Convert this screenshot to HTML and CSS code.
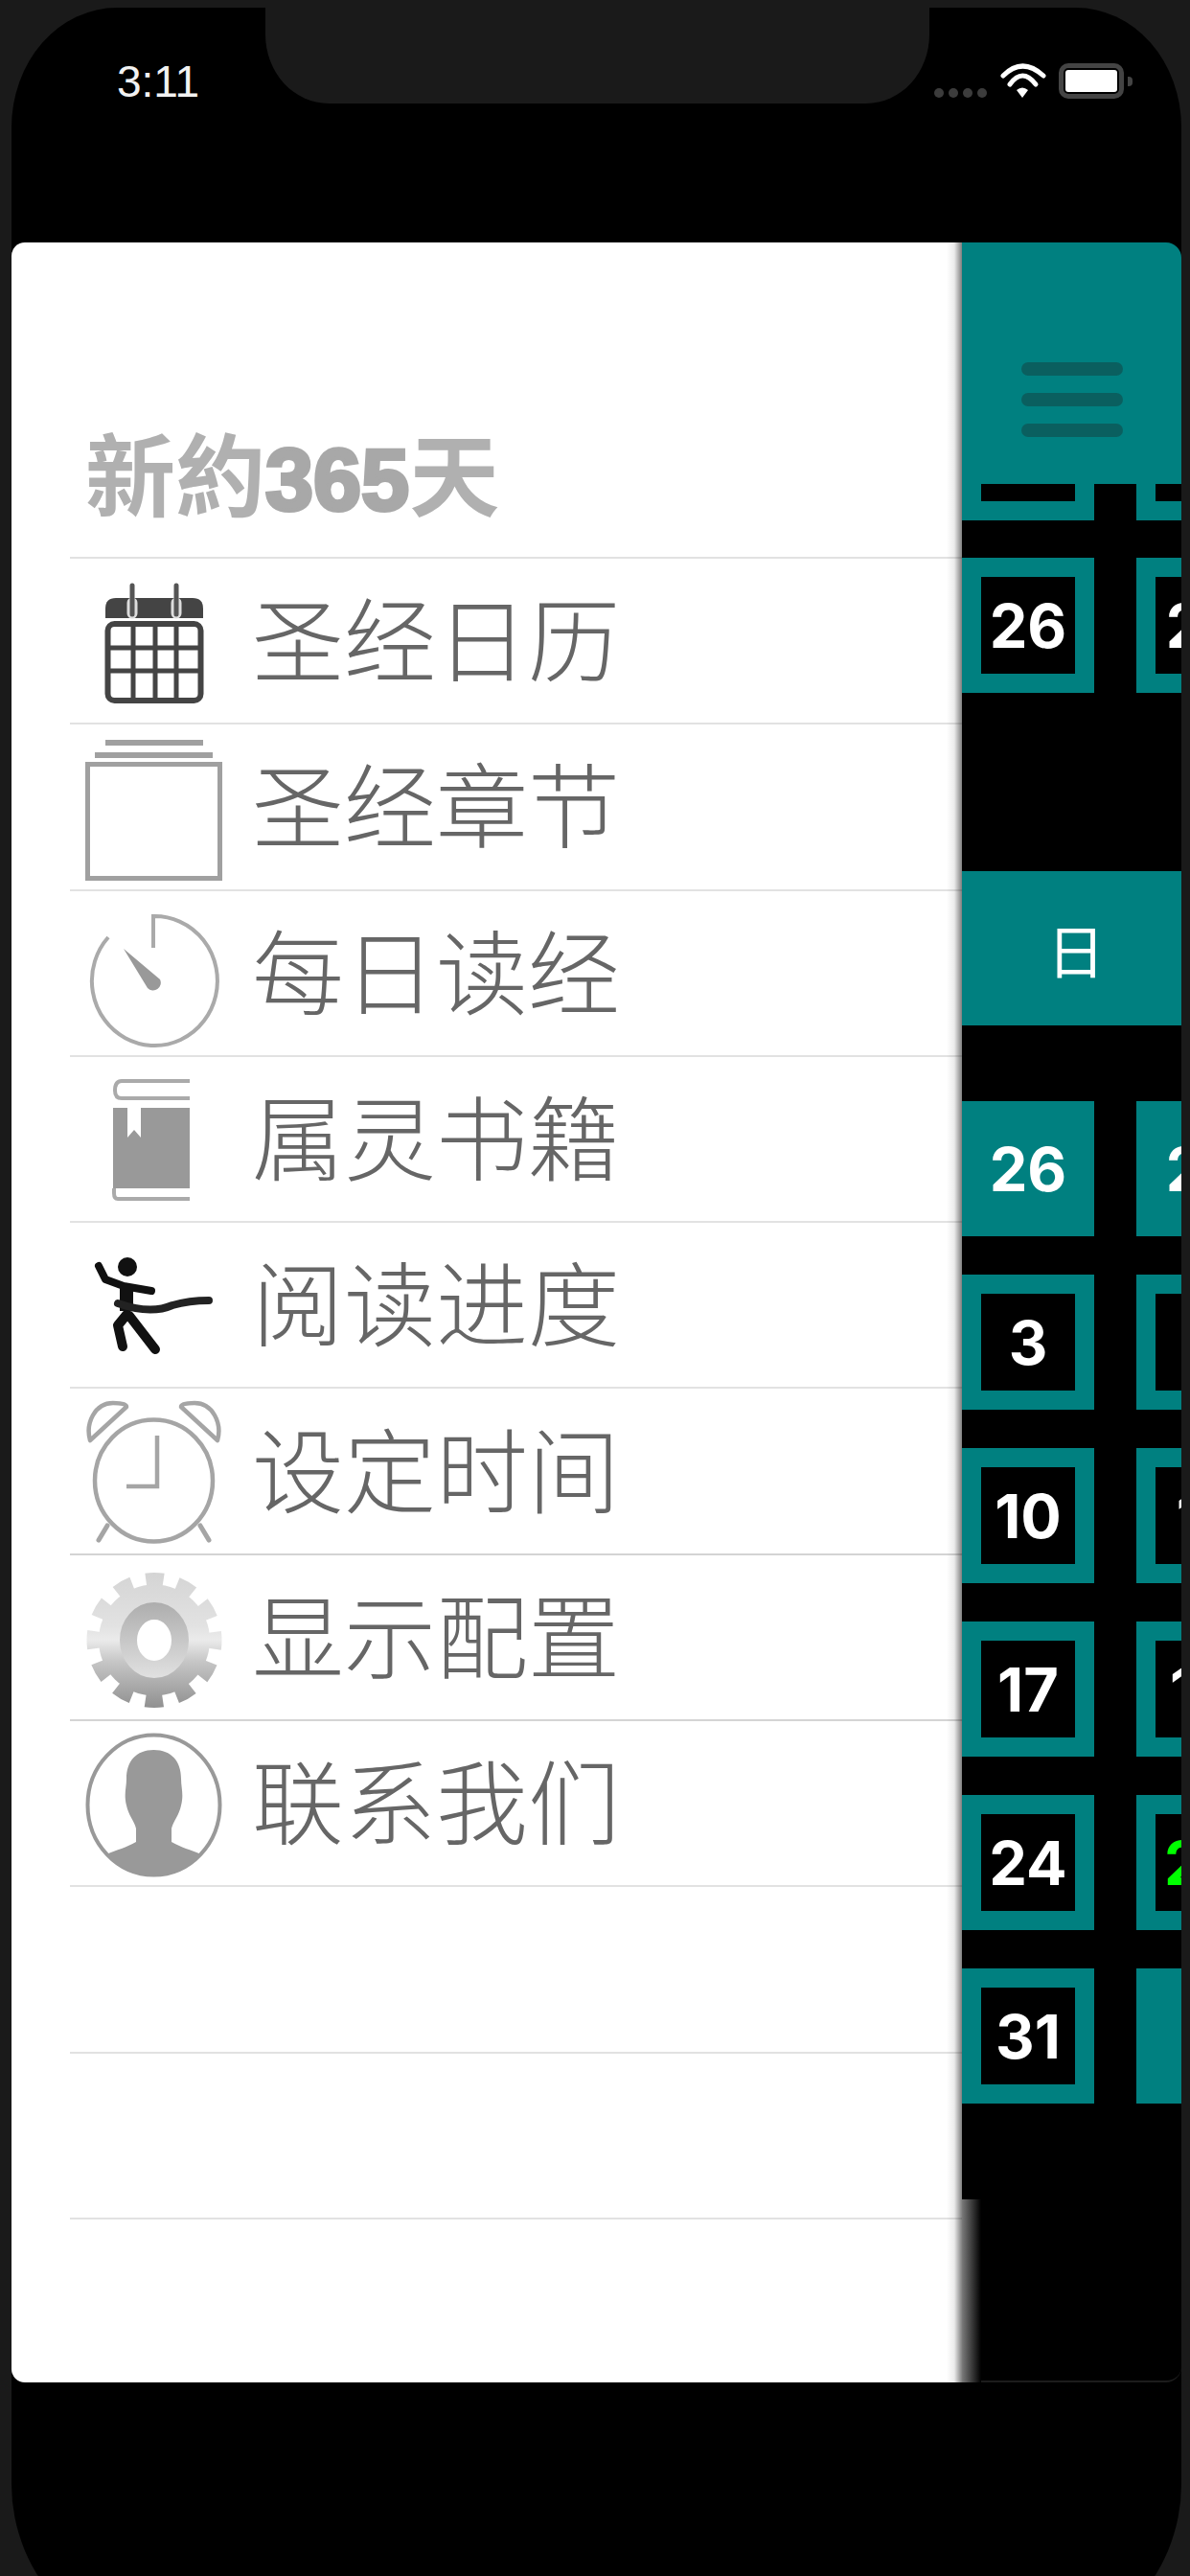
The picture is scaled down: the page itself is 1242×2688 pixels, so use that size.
FILE: index.html
```html
<!DOCTYPE html>
<html lang="zh-CN">
<head>
    <meta charset="UTF-8">
    <meta name="viewport" content="width=device-width, initial-scale=1.0">
    <title>新約365天</title>
    <link rel="stylesheet" href="styles.css">
</head>
<body>
<div class="screen">
    <header class="status">
        <div class="status-left">3:11</div>
        <div class="notch"></div>
        <div class="status-right">
            <div class="dots"><i></i><i></i><i></i><i></i></div>
            <svg class="wifi" width="48" height="38" viewBox="0 0 48 38">
                <path d="M3 14Q23 -6 45 14" fill="none" stroke="#fff" stroke-width="5" stroke-linecap="round"/>
                <path d="M10 23Q23 5 37 23" fill="none" stroke="#fff" stroke-width="5" stroke-linecap="round"/>
                <path d="M17 29Q23 24 29 29L23 37Z" fill="#fff"/>
            </svg>
            <div class="battery"><div class="battery-level"></div></div>
        </div>
    </header>

    <main class="app">
        <nav class="sheet">
            <div class="sheet-title">新約<span class="heavy">365</span>天</div>

            <a class="row">
                <svg class="icon" width="143" height="172" viewBox="0 0 143 172">
                    <path d="M21 62V52Q21 41 32 41H112Q123 41 123 52V62Z" fill="#444"/>
                    <path d="M49 46V57M95 46V57" stroke="#ddd" stroke-width="11" stroke-linecap="round"/>
                    <path d="M49 28V58M95 28V58" stroke="#555" stroke-width="5" stroke-linecap="round"/>
                    <rect x="23.500" y="68" width="97" height="80" rx="7" fill="none" stroke="#444" stroke-width="6"/>
                    <path d="M50 68V148M73 68V148M95 68V148M23 93H121M23 117H121" stroke="#444" stroke-width="5"/>
                </svg>
                <span>圣经日历</span>
            </a>
            <a class="row">
                <svg class="icon" width="143" height="172" viewBox="0 0 143 172">
                    <path d="M21 19H123M10 32H133" stroke="#a0a0a0" stroke-width="6"/>
                    <rect x="2.500" y="41.500" width="138" height="119" fill="none" stroke="#a0a0a0" stroke-width="5"/>
                </svg>
                <span>圣经章节</span>
            </a>
            <a class="row">
                <svg class="icon" width="143" height="172" viewBox="0 0 143 172">
                    <path d="M71 60V27A65.500 67.500 0 1 1 24 49" fill="none" stroke="#aaa" stroke-width="4"/>
                    <path d="M40 61L78 93A8 8 0 0 1 65 102Z" fill="#999"/>
                </svg>
                <span>每日读经</span>
            </a>
            <a class="row">
                <svg class="icon" width="143" height="172" viewBox="0 0 143 172">
                    <path d="M109 25H38Q31 25 31 35Q31 43 38 43H109" fill="none" stroke="#aaa" stroke-width="4"/>
                    <rect x="29" y="53" width="80" height="84" fill="#999"/>
                    <path d="M44 46H58V84L51 76L44 84Z" fill="#fff"/>
                    <path d="M109 148H34Q30 148 30 142V137" fill="none" stroke="#aaa" stroke-width="4"/>
                </svg>
                <span>属灵书籍</span>
            </a>
            <a class="row">
                <svg class="icon" width="143" height="172" viewBox="0 0 143 172">
                    <circle cx="44" cy="46" r="10" fill="#111"/>
                    <path d="M14 45L21 59L40 66L69 71" fill="none" stroke="#111" stroke-width="8" stroke-linecap="round" stroke-linejoin="round"/>
                    <path d="M43 64V92" stroke="#111" stroke-width="14"/>
                    <path d="M34 84Q68 96 91 86Q108 81 129 81" fill="none" stroke="#222" stroke-width="8" stroke-linecap="round"/>
                    <path d="M43 96L34 107L39 129M46 97L73 132" fill="none" stroke="#111" stroke-width="10" stroke-linecap="round" stroke-linejoin="round"/>
                </svg>
                <span>阅读进度</span>
            </a>
            <a class="row row-dark">
                <svg class="icon" width="143" height="172" viewBox="0 0 143 172">
                    <ellipse cx="71.500" cy="96" rx="61.500" ry="63.500" fill="none" stroke="#a5a5a5" stroke-width="4.500"/>
                    <path d="M75 49V102H43" fill="none" stroke="#a5a5a5" stroke-width="4.500"/>
                    <path d="M5 54C0 36 10 15 29 15C37 15 43 16 43 19Z" fill="none" stroke="#a5a5a5" stroke-width="4.500" stroke-linejoin="round"/>
                    <path d="M138 54C143 36 133 15 114 15C106 15 100 16 100 19Z" fill="none" stroke="#a5a5a5" stroke-width="4.500" stroke-linejoin="round"/>
                    <path d="M23 143L14 158M120 143L129 158" stroke="#a5a5a5" stroke-width="5" stroke-linecap="round"/>
                </svg>
                <span>设定时间</span>
            </a>
            <a class="row row-dark">
                <svg class="icon" width="143" height="172" viewBox="0 0 143 172">
                    <defs>
                        <linearGradient id="gearFill" gradientUnits="userSpaceOnUse" x1="0" y1="18" x2="0" y2="160">
                            <stop offset="0" stop-color="#d4d4d4"/>
                            <stop offset="0.4" stop-color="#e2e2e2"/>
                            <stop offset="0.5" stop-color="#ebebeb"/>
                            <stop offset="0.66" stop-color="#c6c6c6"/>
                            <stop offset="1" stop-color="#909090"/>
                        </linearGradient>
                        <linearGradient id="gearRing" gradientUnits="userSpaceOnUse" x1="0" y1="48" x2="0" y2="128">
                            <stop offset="0" stop-color="#acacac"/>
                            <stop offset="1" stop-color="#e0e0e0"/>
                        </linearGradient>
                    </defs>
                    <circle cx="72" cy="89.500" r="58" fill="url(#gearFill)"/>
                    <circle cx="72" cy="89.500" r="62" fill="none" stroke="url(#gearFill)" stroke-width="17" stroke-dasharray="18 14.460" stroke-dashoffset="9"/>
                    <ellipse cx="72" cy="89.500" rx="27" ry="30.500" fill="#fff" stroke="url(#gearRing)" stroke-width="18"/>
                </svg>
                <span>显示配置</span>
            </a>
            <a class="row">
                <svg class="icon" width="143" height="172" viewBox="0 0 143 172">
                    <ellipse cx="71.500" cy="87.500" rx="69" ry="73" fill="none" stroke="#999" stroke-width="4"/>
                    <path d="M71.500 30C90 30 100 42 100 60C100 70 103 76 100 88C98 98 92 104 90 112L90 126C100 132 110 134 121 139A69 73 0 0 1 22 139C33 134 43 132 53 126L53 112C51 104 45 98 43 88C40 76 43 70 43 60C43 42 53 30 71.500 30Z" fill="#999"/>
                </svg>
                <span>联系我们</span>
            </a>
            <a class="row"></a>
            <a class="row"></a>
            <div class="sheet-fade"></div>
        </nav>

        <section class="cal">
            <div class="cal-bar">
                <i></i><i></i><i></i>
            </div>
            <div class="cal-body">
                <div class="week week-clipped">
                    <div class="day"></div><div class="day"></div>
                </div>
                <div class="week">
                    <div class="day">26</div><div class="day">27</div>
                </div>
                <div class="weekdays">
                    <span>日</span>
                </div>
                <div class="week">
                    <div class="day day-off">26</div><div class="day day-off">27</div>
                </div>
                <div class="week">
                    <div class="day">3</div><div class="day"></div>
                </div>
                <div class="week">
                    <div class="day">10</div><div class="day">11</div>
                </div>
                <div class="week">
                    <div class="day">17</div><div class="day">18</div>
                </div>
                <div class="week">
                    <div class="day">24</div><div class="day day-today">25</div>
                </div>
                <div class="week">
                    <div class="day">31</div><div class="day day-off"></div>
                </div>
            </div>
        </section>
        <div class="sheet-shadow"></div>
    </main>
</div>
</body>
</html>
```

FILE: styles.css
```css
html, body {
    margin: 0;
    height: 2688px;
    overflow: hidden;
    background-color: #1a1a1a;
}
body {
    font-family: "Liberation Sans", "Noto Sans CJK SC", sans-serif;
}
.screen {
    width: 1221px;
    height: 2764px;
    margin: 8px 0 0 12px;
    background-color: #000000;
    border-radius: 110px 110px 180px 180px / 125px 125px 180px 180px;
    filter: blur(0.7px);
}

/* status bar */
.status {
    display: flex;
    height: 100px;
}
.status-left {
    width: 265px;
    padding: 50px 0 0 110px;
    box-sizing: border-box;
    color: #f2f2f2;
    font-size: 46px;
    line-height: 54px;
}
.notch {
    width: 693px;
    background-color: #1a1a1a;
    border-radius: 0 0 66px 66px / 0 0 72px 72px;
}
.status-right {
    display: flex;
    align-items: flex-start;
    padding: 57px 0 0 5px;
}
.dots {
    display: flex;
    gap: 5px;
    margin: 27px 14px 0 0;
}
.dots i {
    width: 10px;
    height: 10px;
    border-radius: 50%;
    background-color: #3c3c3c;
}
.wifi {
    margin-right: 13px;
}
.battery {
    position: relative;
    width: 68px;
    height: 37px;
    margin-top: 1px;
    padding: 2px;
    box-sizing: border-box;
    border: 5px solid #444444;
    border-radius: 10px;
}
.battery::after {
    content: "";
    position: absolute;
    top: 9px;
    right: -14px;
    width: 5px;
    height: 10px;
    border-radius: 0 4px 4px 0;
    background-color: #444444;
}
.battery-level {
    height: 100%;
    border-radius: 3px;
    background-color: #ffffff;
}

/* drawer + calendar */
.app {
    position: relative;
    display: flex;
    height: 2233px;
    margin-top: 145px;
}
.sheet {
    position: relative;
    width: 992px;
    background-color: #ffffff;
    border-radius: 14px 0 0 14px;
}
.sheet-title {
    height: 330px;
    margin-left: 61px;
    padding: 202px 0 0 16px;
    box-sizing: border-box;
    border-bottom: 2px solid #e2e2e2;
    color: #b0b0b0;
    font-size: 94px;
    font-weight: 700;
    line-height: 90px;
}
.heavy {
    font-size: 90px;
    -webkit-text-stroke: 4px #a8a8a8;
    color: #a8a8a8;
}
.row {
    display: flex;
    align-items: center;
    height: 173.3px;
    margin-left: 61px;
    box-sizing: border-box;
    border-bottom: 2px solid #e2e2e2;
    color: #666666;
    font-size: 96px;
    font-weight: 300;
}
.row span {
    margin-bottom: 12px;
}
.row-dark {
    border-bottom-color: #d4d4d4;
}
.icon {
    flex: none;
    margin: 0 31px 0 16px;
}
.sheet-fade {
    position: absolute;
    top: 0;
    right: 0;
    width: 16px;
    height: 100%;
    background: linear-gradient(to right, rgba(0, 0, 0, 0), rgba(0, 0, 0, 0.08) 50%, rgba(0, 0, 0, 0.5));
}
.sheet-shadow {
    position: absolute;
    top: 2042px;
    bottom: 0;
    left: 992px;
    width: 20px;
    background: linear-gradient(to right, #7a7a7a, #000000);
}
.cal {
    width: 229px;
    overflow: hidden;
    box-sizing: border-box;
    border-bottom: 2px solid #1c1c1c;
    border-radius: 0 16px 16px 0;
    background-color: #000000;
}
.cal-bar {
    position: relative;
    z-index: 1;
    display: flex;
    flex-direction: column;
    gap: 18px;
    height: 252px;
    padding: 125px 0 0 62px;
    box-sizing: border-box;
    background-color: #008080;
}
.cal-bar i {
    width: 106px;
    height: 14px;
    border-radius: 7px;
    background-color: #0a5f5f;
}
.week {
    display: flex;
    gap: 44px;
    margin-bottom: 40px;
}
.week-clipped {
    margin-top: -103px;
    margin-bottom: 39px;
}
.day {
    display: flex;
    flex: none;
    align-items: center;
    justify-content: center;
    width: 138px;
    height: 141px;
    box-sizing: border-box;
    border: 20px solid #008080;
    background-color: #000000;
    color: #ffffff;
    font-family: Inter, "Liberation Sans", sans-serif;
    font-size: 63px;
    font-weight: 700;
}
.day-off {
    background-color: #008080;
}
.day-today {
    color: #00ff00;
}
.weekdays {
    display: flex;
    height: 161px;
    margin: 186px 0 79px;
    background-color: #008080;
    color: #ffffff;
    font-size: 60px;
}
.weekdays span {
    display: flex;
    flex: none;
    align-items: center;
    justify-content: center;
    width: 238px;
}
```
